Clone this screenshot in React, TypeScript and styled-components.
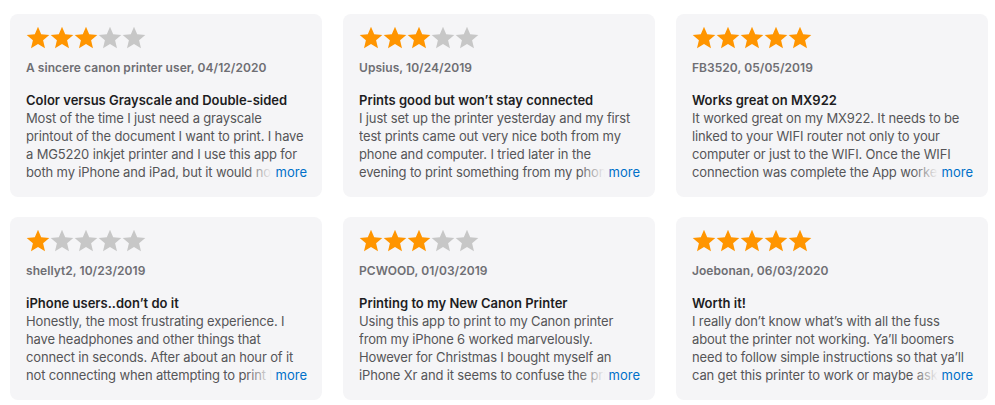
import React from "react";
import styled, { createGlobalStyle } from "styled-components";

const Global = createGlobalStyle`
  html, body { margin: 0; padding: 0; background: #ffffff; }
  body { font-family: Inter, "Open Sans", "Liberation Sans", sans-serif; -webkit-font-smoothing: antialiased; }
`;

type Review = { rating: number; author: string; date: string; title: string; body: string };

const reviews: Review[] = [
  {
    rating: 3,
    author: "A sincere canon printer user",
    date: "04/12/2020",
    title: "Color versus Grayscale and Double-sided",
    body: "Most of the time I just need a grayscale printout of the document I want to print. I have a MG5220 inkjet printer and I use this app for both my iPhone and iPad, but it would not let me choose grayscale or double-sided printing.",
  },
  {
    rating: 3,
    author: "Upsius",
    date: "10/24/2019",
    title: "Prints good but won’t stay connected",
    body: "I just set up the printer yesterday and my first test prints came out very nice both from my phone and computer. I tried later in the evening to print something from my phone and it would not connect.",
  },
  {
    rating: 5,
    author: "FB3520",
    date: "05/05/2019",
    title: "Works great on MX922",
    body: "It worked great on my MX922. It needs to be linked to your WIFI router not only to your computer or just to the WIFI. Once the WIFI connection was complete the App worked perfectly.",
  },
  {
    rating: 1,
    author: "shellyt2",
    date: "10/23/2019",
    title: "iPhone users..don’t do it",
    body: "Honestly, the most frustrating experience. I have headphones and other things that connect in seconds. After about an hour of it not connecting when attempting to print I gave up.",
  },
  {
    rating: 3,
    author: "PCWOOD",
    date: "01/03/2019",
    title: "Printing to my New Canon Printer",
    body: "Using this app to print to my Canon printer from my iPhone 6 worked marvelously. However for Christmas I bought myself an iPhone Xr and it seems to confuse the printer completely.",
  },
  {
    rating: 5,
    author: "Joebonan",
    date: "06/03/2020",
    title: "Worth it!",
    body: "I really don’t know what’s with all the fuss about the printer not working. Ya’ll boomers need to follow simple instructions so that ya’ll can get this printer to work or maybe ask someone for help.",
  },
];

const Page = styled.main`
  display: grid;
  grid-template-columns: repeat(3, 312px);
  grid-auto-rows: 183px;
  column-gap: 21px;
  row-gap: 20px;
  padding: 14px 0 0 10px;
`;

const Card = styled.article`
  background: #f5f5f7;
  border-radius: 8px;
  padding: 12px 16px 0 16px;
  box-sizing: border-box;
  display: flex;
  flex-direction: column;
  overflow: hidden;
`;

const Stars = styled.div`
  display: flex;
  height: 24px;
`;

const Author = styled.div`
  margin-top: 10px;
  font-size: 12px;
  line-height: 16px;
  font-weight: 600;
  letter-spacing: 0.05px;
  color: #6e6e73;
`;

const Title = styled.h3`
  margin: 15px 0 0;
  font-size: 13px;
  line-height: 18px;
  font-weight: 600;
  color: #1d1d1f;
`;

const BodyWrap = styled.div`
  position: relative;
  margin-right: -1px;
`;

const Body = styled.p`
  margin: 0;
  font-size: 13px;
  line-height: 18px;
  letter-spacing: -0.15px;
  color: #555558;
  height: 72px;
  overflow: hidden;
`;

const More = styled.span`
  position: absolute;
  right: 0;
  bottom: 0;
  font-size: 13px;
  line-height: 18px;
  color: #0070c9;
  padding-left: 30px;
  background: linear-gradient(to right, rgba(245, 245, 247, 0) 0, #f5f5f7 26px);
`;

const StarIcon: React.FC<{ filled: boolean }> = ({ filled }) => (
  <svg width="24" height="24" viewBox="0 0 24 24" aria-hidden>
    <path
      d="M12 0.8l3.2 7.5 8.1.7-6.2 5.3 1.9 8L12 18.1l-7 4.2 1.9-8L.7 9l8.1-.7z"
      fill={filled ? "#ff9500" : "#c7c7c7"}
    />
  </svg>
);

export default function App() {
  return (
    <>
      <Global />
      <Page>
        {reviews.map((r, i) => (
          <Card key={i}>
            <Stars>
              {[0, 1, 2, 3, 4].map((s) => (
                <StarIcon key={s} filled={s < r.rating} />
              ))}
            </Stars>
            <Author>
              {r.author}, {r.date}
            </Author>
            <Title>{r.title}</Title>
            <BodyWrap>
              <Body>{r.body}</Body>
              <More>more</More>
            </BodyWrap>
          </Card>
        ))}
      </Page>
    </>
  );
}
